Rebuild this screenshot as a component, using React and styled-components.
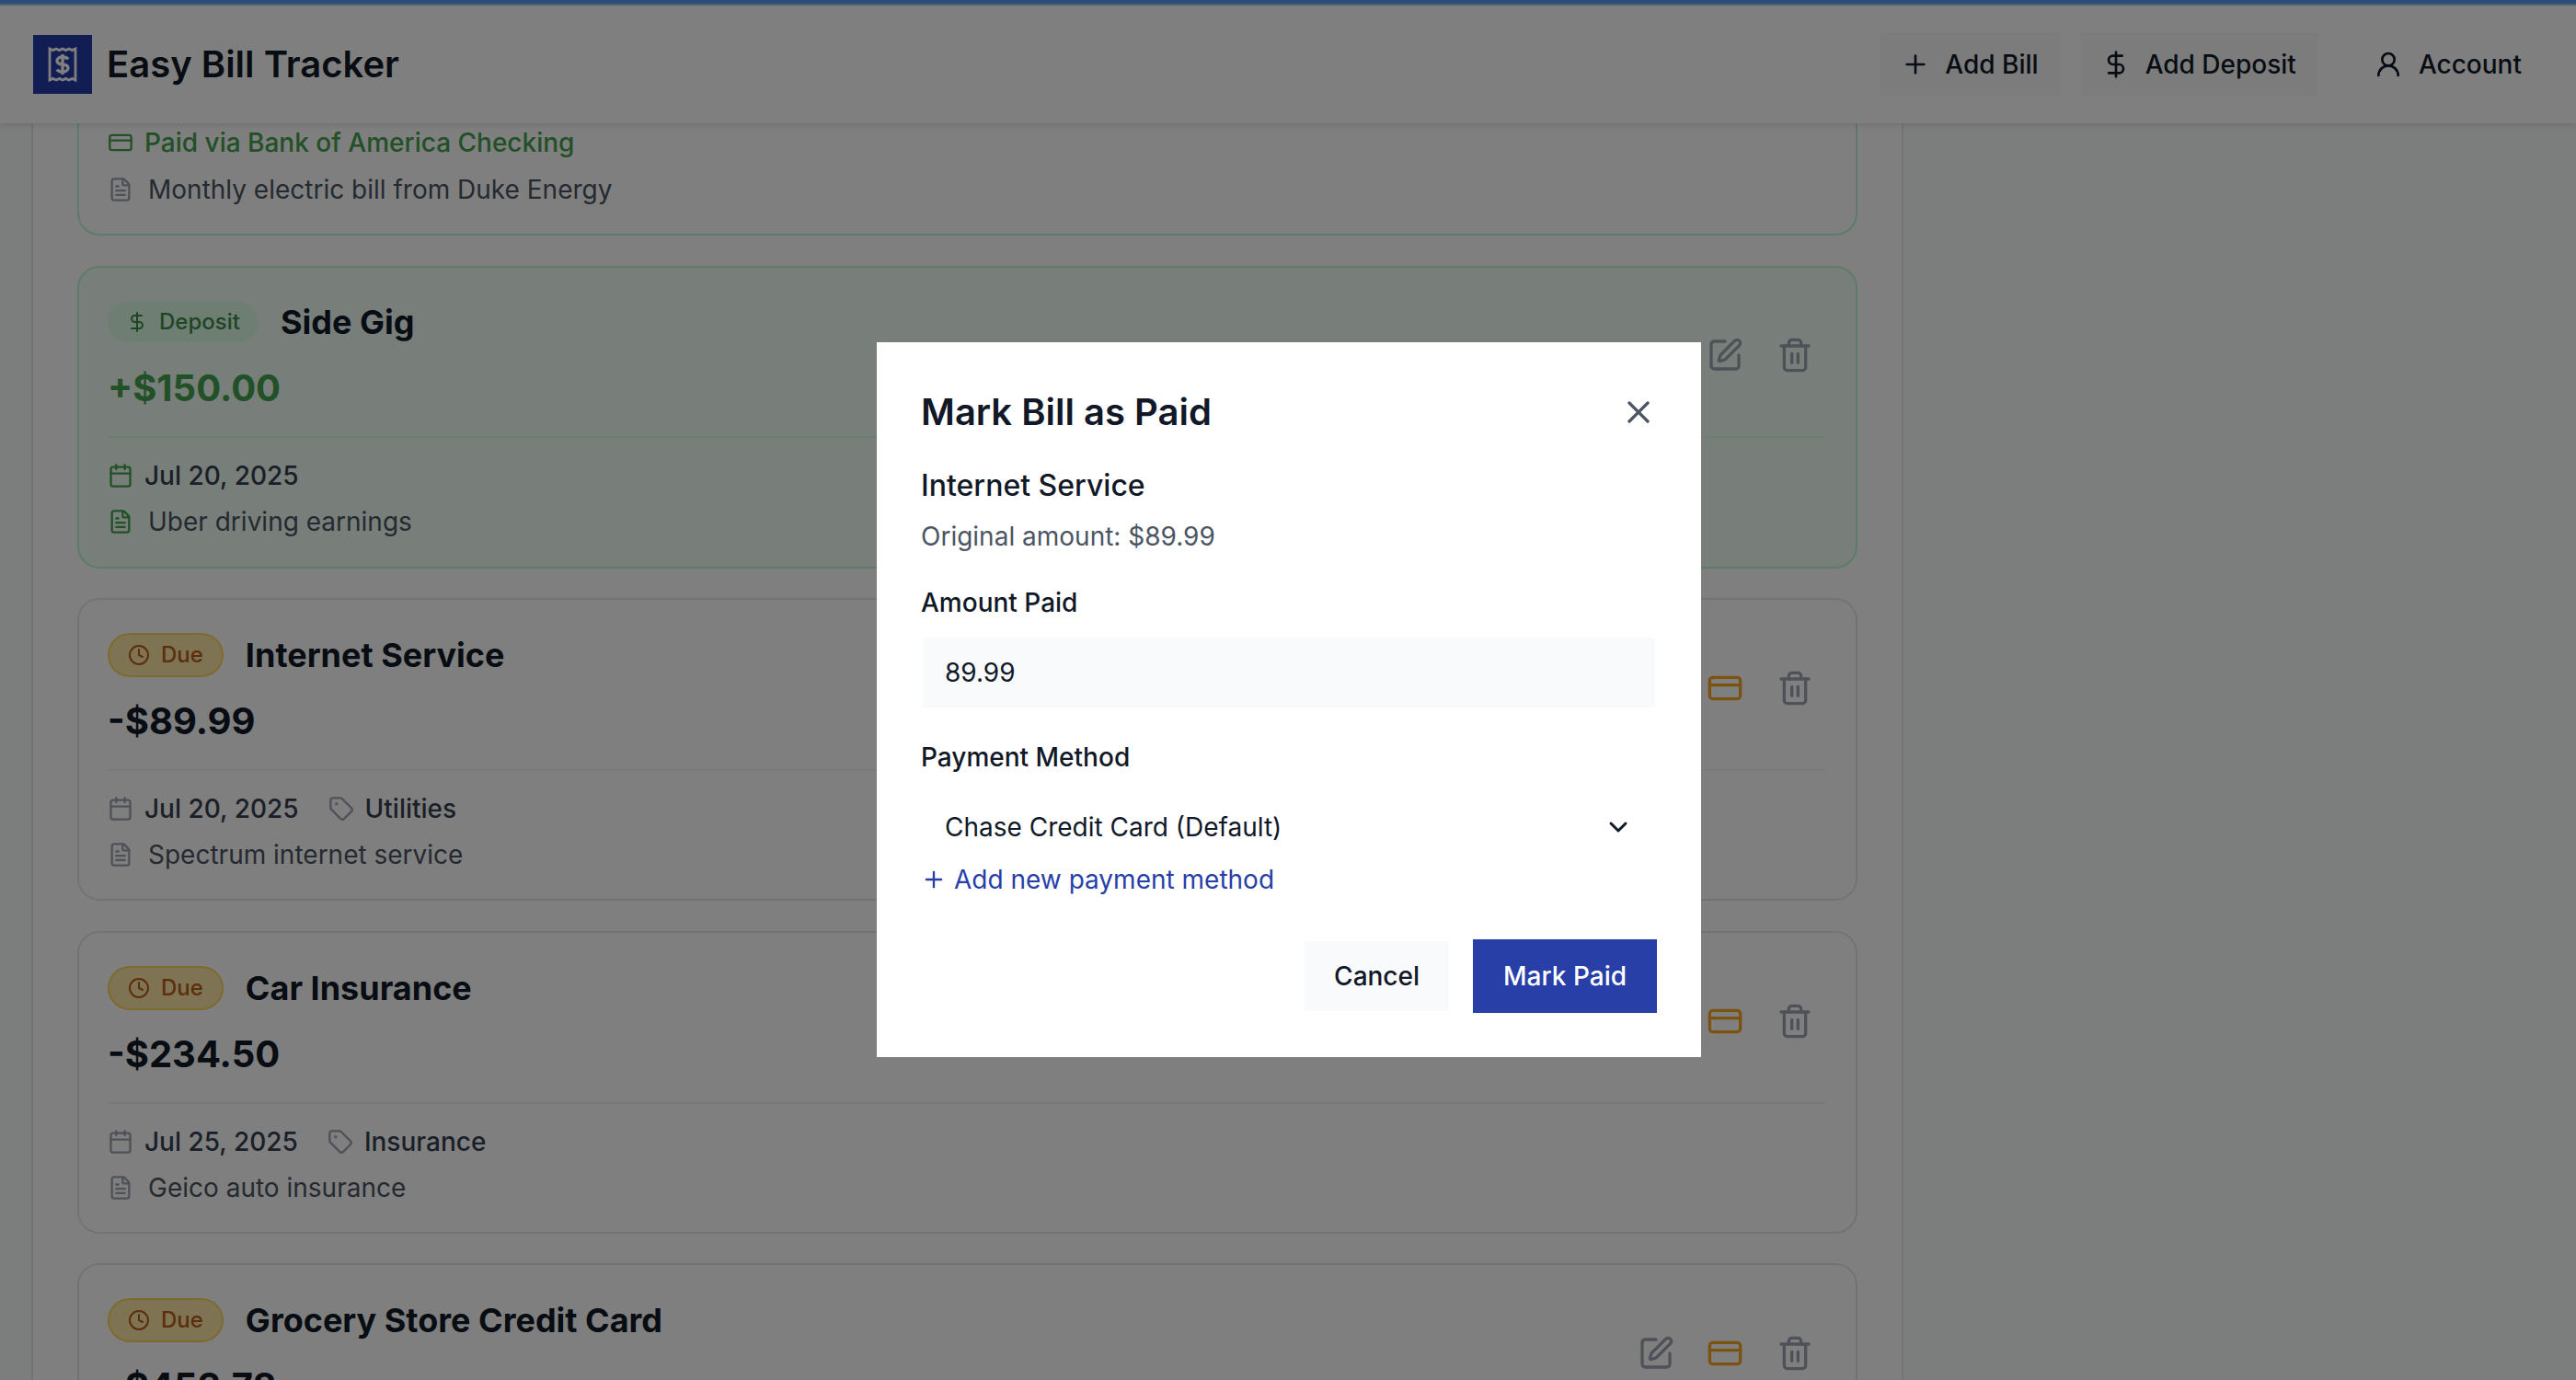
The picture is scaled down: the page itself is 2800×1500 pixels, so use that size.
import React from 'react';
import styled, { createGlobalStyle } from 'styled-components';
import {
  Calendar,
  ChevronDown,
  Clock,
  CreditCard,
  DollarSign,
  FileText,
  Plus,
  SquarePen,
  Tag,
  Trash2,
  UserRound,
  X,
} from 'lucide-react';

const GlobalStyle = createGlobalStyle`
  html, body {
    margin: 0;
    padding: 0;
    height: 1500px;
    overflow: hidden;
    background: #f9fafb;
    font-family: Inter, "Liberation Sans", sans-serif;
    color: #111827;
  }
  * { box-sizing: border-box; }
`;

const Page = styled.div`
  height: 1500px;
  overflow: hidden;
  background: #f9fafb;
`;

const Header = styled.header`
  height: 134px;
  background: #fff;
  border-top: 4px solid #5a9cf0;
  box-shadow: inset 0 2px 0 #a0c0e8, 0 2px 6px rgba(0, 0, 0, 0.12);
  display: flex;
  align-items: center;
  justify-content: space-between;
  padding: 2px 36px 0;
  position: relative;
  z-index: 2;
`;

const Brand = styled.div`
  display: flex;
  align-items: center;
  gap: 16px;
`;

const LogoBox = styled.div`
  width: 64px;
  height: 64px;
  background: #243aa8;
  display: flex;
  align-items: center;
  justify-content: center;
`;

const AppName = styled.h1`
  margin: 0;
  font-size: 40px;
  line-height: 56px;
  font-weight: 600;
  color: #111827;
`;

const Nav = styled.nav`
  display: flex;
  align-items: center;
  gap: 22px;
`;

const NavButton = styled.button`
  height: 68px;
  padding: 0 23px;
  margin-left: ${props => (props.$plain ? '16px' : '0')};
  border: 0;
  background: ${props => (props.$plain ? 'transparent' : '#f8f9fa')};
  display: flex;
  align-items: center;
  gap: ${props => (props.$plain ? '17px' : '16px')};
  font-family: inherit;
  font-size: 28px;
  font-weight: 500;
  color: #111827;
`;

const Main = styled.main`
  width: 2035px;
  margin-left: 34px;
  height: 1366px;
  overflow: hidden;
  background: #fff;
  border-left: 2px solid #e5e7eb;
  border-right: 2px solid #e5e7eb;
  padding: 0 48px;
  display: flex;
  flex-direction: column;
  gap: 32.5px;
`;

const Card = styled.article`
  flex: none;
  border: 2px solid ${props => (props.$tone === 'due' ? '#e5e7eb' : '#bbf7d0')};
  background: ${props => (props.$tone === 'deposit' ? '#f0fdf4' : '#fff')};
  border-radius: 24px;
  padding: ${props => (props.$tone === 'deposit' ? '31px 33px 33px 31px' : '32px 33px 32px 31px')};
`;

const CutCard = styled(Card)`
  border-top: 0;
  border-top-left-radius: 0;
  border-top-right-radius: 0;
  padding-top: 5px;
`;

const TopRow = styled.div`
  display: flex;
  align-items: center;
  justify-content: space-between;
  padding-bottom: 24px;
  border-bottom: 2px solid ${props => (props.$tone === 'deposit' ? '#dcfce7' : '#f3f4f6')};
`;

const TitleRow = styled.div`
  display: flex;
  align-items: center;
  gap: 24px;
  height: 56px;
  margin-bottom: 16px;
`;

const Badge = styled.span`
  display: inline-flex;
  align-items: center;
  gap: 12px;
  padding: 6px 20px;
  border-radius: 999px;
  font-size: 24px;
  line-height: 32px;
  font-weight: 500;
  background: ${props => (props.$tone === 'deposit' ? '#dcfce7' : '#fce8a8')};
  color: ${props => (props.$tone === 'deposit' ? '#3f8a48' : '#b85c14')};
  border: ${props => (props.$tone === 'deposit' ? '0' : '2px solid #fbd75b')};
`;

const BillTitle = styled.h3`
  margin: 0;
  font-size: 36px;
  line-height: 56px;
  font-weight: 700;
  color: #111827;
`;

const Amount = styled.div`
  font-size: 40px;
  line-height: 56px;
  font-weight: 700;
  color: ${props => (props.$tone === 'deposit' ? '#45a04e' : '#111827')};
`;

const Actions = styled.div`
  display: flex;
  align-items: center;
  justify-content: flex-end;
  gap: 11.5px;
  margin-right: 1.5px;
`;

const IconButton = styled.button`
  width: 64px;
  height: 64px;
  padding: 0;
  border: 0;
  background: transparent;
  display: flex;
  align-items: center;
  justify-content: center;
  color: ${props => (props.$pay ? '#f5a623' : '#9ca3af')};
`;

const MetaRow = styled.div`
  display: flex;
  align-items: center;
  gap: 32px;
  height: 32px;
  margin-top: 25px;
`;

const MetaItem = styled.span`
  display: inline-flex;
  align-items: center;
  gap: 12px;
  font-size: 28px;
  line-height: 32px;
  font-weight: 500;
  color: ${props => (props.$paid ? '#45a04e' : '#374151')};
  svg { color: ${props => (props.$paid || props.$tone === 'deposit' ? '#45a04e' : '#9ca3af')}; }
`;

const Note = styled.div`
  display: flex;
  align-items: center;
  gap: 16px;
  height: 32px;
  margin-top: ${props => (props.$cut ? '17px' : '18px')};
  font-size: 28px;
  line-height: 32px;
  color: #4b5563;
  svg { color: ${props => (props.$tone === 'deposit' ? '#45a04e' : '#9ca3af')}; }
`;

const Overlay = styled.div`
  position: fixed;
  inset: 0;
  z-index: 10;
  background: rgba(0, 0, 0, 0.5);
  display: flex;
  align-items: center;
  justify-content: center;
  padding: 21px 0 0 2px;
`;

const Modal = styled.div`
  width: 896px;
  background: #fff;
  padding: 48px;
`;

const ModalHead = styled.div`
  display: flex;
  align-items: center;
  justify-content: space-between;
  height: 56px;
  margin-bottom: 28px;
`;

const ModalTitle = styled.h2`
  margin: 0;
  font-size: 40px;
  line-height: 56px;
  font-weight: 600;
  color: #111827;
`;

const CloseButton = styled.button`
  width: 40px;
  height: 40px;
  padding: 0;
  border: 0;
  background: transparent;
  color: #4b5563;
  display: flex;
`;

const BillName = styled.h4`
  margin: 0;
  font-size: 32px;
  line-height: 48px;
  font-weight: 500;
  color: #111827;
`;

const Original = styled.p`
  margin: 11px 0 32px;
  font-size: 28px;
  line-height: 40px;
  color: #4b5563;
`;

const FieldLabel = styled.label`
  display: block;
  margin-bottom: 16px;
  font-size: 28px;
  line-height: 40px;
  font-weight: 500;
  color: #111827;
`;

const TextInput = styled.input`
  display: block;
  width: 100%;
  height: 80px;
  margin-bottom: 32px;
  padding: 0 24px;
  border: 2px solid #fff;
  background: #f9fafb;
  font-family: inherit;
  font-size: 28px;
  color: #111827;
  outline: none;
`;

const SelectBox = styled.div`
  height: 80px;
  padding: 0 24px;
  border: 2px solid #fff;
  display: flex;
  align-items: center;
  justify-content: space-between;
  font-size: 28px;
  color: #111827;
`;

const AddMethod = styled.button`
  display: flex;
  align-items: center;
  gap: 8px;
  height: 32px;
  margin-top: 1px;
  padding: 0;
  border: 0;
  background: transparent;
  font-family: inherit;
  font-size: 28px;
  line-height: 32px;
  color: #283fa8;
`;

const ModalFoot = styled.div`
  display: flex;
  justify-content: flex-end;
  gap: 24px;
  margin-top: 49px;
`;

const FootButton = styled.button`
  height: 80px;
  padding: 0 ${props => (props.$primary ? '31px' : '32px')};
  border: 2px solid ${props => (props.$primary ? '#283fa8' : '#fff')};
  background: ${props => (props.$primary ? '#283fa8' : '#f9fafb')};
  color: ${props => (props.$primary ? '#fff' : '#111827')};
  font-family: inherit;
  font-size: 28px;
  font-weight: 500;
`;

// receipt outline with a dollar sign, the app's logo
const ReceiptLogo = () => (
  <svg width="34" height="40" viewBox="0 0 34 40" fill="none" stroke="#fff" strokeWidth="2.8">
    <path d="M3 3 l3.5 1.6 l3.5 -1.6 l3.5 1.6 l3.5 -1.6 l3.5 1.6 l3.5 -1.6 l3.5 1.6 L31 3 V37 l-3.5 -1.6 l-3.5 1.6 l-3.5 -1.6 l-3.5 1.6 l-3.5 -1.6 l-3.5 1.6 l-3.5 -1.6 L3 37 Z" />
    <path d="M17 9 V31 M23 14.5 C22 12.500 20 12 17 12 C13.500 12 11 13.500 11 16 C11 19 14 19.800 17 20 C20 20.200 23 21 23 24 C23 26.500 20.500 28 17 28 C14 28 12 27.500 11 25.500" strokeWidth="3.4" />
  </svg>
);

const billCards = [
  { title: 'Internet Service', amount: '-$89.99', date: 'Jul 20, 2025', category: 'Utilities', note: 'Spectrum internet service' },
  { title: 'Car Insurance', amount: '-$234.50', date: 'Jul 25, 2025', category: 'Insurance', note: 'Geico auto insurance' },
  { title: 'Grocery Store Credit Card', amount: '-$453.78', date: 'Jul 28, 2025', category: 'Credit Card', note: 'Minimum payment' },
];

const App = () => {
  return (
    <Page>
      <GlobalStyle />
      <Header>
        <Brand>
          <LogoBox>
            <ReceiptLogo />
          </LogoBox>
          <AppName>Easy Bill Tracker</AppName>
        </Brand>
        <Nav>
          <NavButton><Plus size={32} />Add Bill</NavButton>
          <NavButton><DollarSign size={32} />Add Deposit</NavButton>
          <NavButton $plain><UserRound size={32} />Account</NavButton>
        </Nav>
      </Header>

      <Main>
        <CutCard $tone="paid">
          <MetaItem $paid><CreditCard size={28} />Paid via Bank of America Checking</MetaItem>
          <Note $cut><FileText size={28} />Monthly electric bill from Duke Energy</Note>
        </CutCard>

        <Card $tone="deposit">
          <TopRow $tone="deposit">
            <div>
              <TitleRow>
                <Badge $tone="deposit"><DollarSign size={24} />Deposit</Badge>
                <BillTitle>Side Gig</BillTitle>
              </TitleRow>
              <Amount $tone="deposit">+$150.00</Amount>
            </div>
            <Actions>
              <IconButton><SquarePen size={40} /></IconButton>
              <IconButton><Trash2 size={40} /></IconButton>
            </Actions>
          </TopRow>
          <MetaRow>
            <MetaItem $tone="deposit"><Calendar size={28} />Jul 20, 2025</MetaItem>
          </MetaRow>
          <Note $tone="deposit"><FileText size={28} />Uber driving earnings</Note>
        </Card>

        {billCards.map(bill => (
          <Card $tone="due" key={bill.title}>
            <TopRow>
              <div>
                <TitleRow>
                  <Badge><Clock size={24} />Due</Badge>
                  <BillTitle>{bill.title}</BillTitle>
                </TitleRow>
                <Amount>{bill.amount}</Amount>
              </div>
              <Actions>
                <IconButton><SquarePen size={40} /></IconButton>
                <IconButton $pay><CreditCard size={40} /></IconButton>
                <IconButton><Trash2 size={40} /></IconButton>
              </Actions>
            </TopRow>
            <MetaRow>
              <MetaItem><Calendar size={28} />{bill.date}</MetaItem>
              <MetaItem><Tag size={28} />{bill.category}</MetaItem>
            </MetaRow>
            <Note><FileText size={28} />{bill.note}</Note>
          </Card>
        ))}
      </Main>

      <Overlay>
        <Modal>
          <ModalHead>
            <ModalTitle>Mark Bill as Paid</ModalTitle>
            <CloseButton><X size={40} /></CloseButton>
          </ModalHead>
          <BillName>Internet Service</BillName>
          <Original>Original amount: $89.99</Original>
          <FieldLabel>Amount Paid</FieldLabel>
          <TextInput defaultValue="89.99" />
          <FieldLabel>Payment Method</FieldLabel>
          <SelectBox>
            Chase Credit Card (Default)
            <ChevronDown size={32} strokeWidth={2.2} />
          </SelectBox>
          <AddMethod><Plus size={28} />Add new payment method</AddMethod>
          <ModalFoot>
            <FootButton>Cancel</FootButton>
            <FootButton $primary>Mark Paid</FootButton>
          </ModalFoot>
        </Modal>
      </Overlay>
    </Page>
  );
};

export default App;
